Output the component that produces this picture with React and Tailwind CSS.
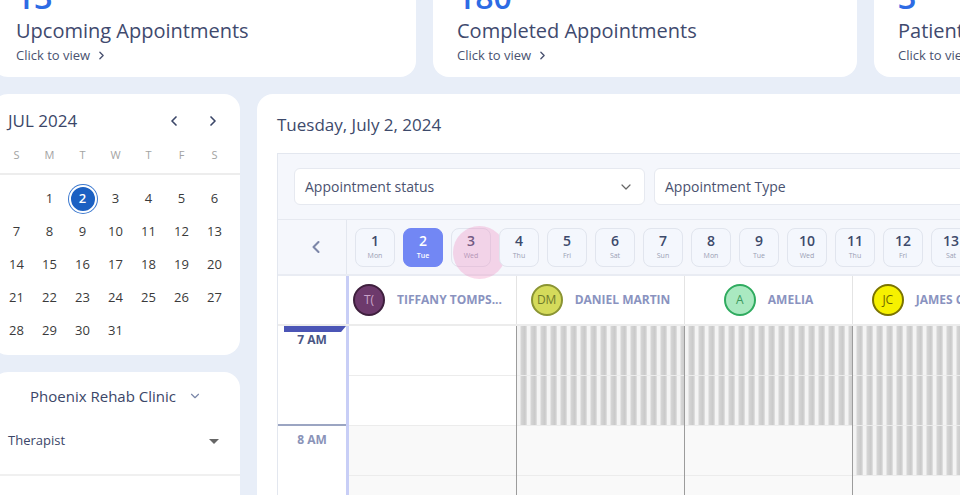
import React from "react";
import { ChevronLeft, ChevronRight, ChevronDown } from "lucide-react";

const stats = [
  { value: "13", label: "Upcoming Appointments" },
  { value: "180", label: "Completed Appointments" },
  { value: "3", label: "Patients" },
];

const weekdays = ["S", "M", "T", "W", "T", "F", "S"];

const monthCells = [
  null, 1, 2, 3, 4, 5, 6,
  7, 8, 9, 10, 11, 12, 13,
  14, 15, 16, 17, 18, 19, 20,
  21, 22, 23, 24, 25, 26, 27,
  28, 29, 30, 31, null, null, null,
];

const strip = [
  [1, "Mon"], [2, "Tue"], [3, "Wed"], [4, "Thu"], [5, "Fri"], [6, "Sat"], [7, "Sun"],
  [8, "Mon"], [9, "Tue"], [10, "Wed"], [11, "Thu"], [12, "Fri"], [13, "Sat"], [14, "Sun"],
];

const therapists = [
  { initials: "T(", name: "TIFFANY TOMPS...", avatar: "bg-[#6d3a6c] border-[#3e1f3d] text-[#c9a3c8]", left: true, blocked: [false, false, false, false] },
  { initials: "DM", name: "DANIEL MARTIN", avatar: "bg-[#d5db5b] border-[#8a9433] text-[#6f7a2c]", blocked: [true, true, false, false] },
  { initials: "A", name: "AMELIA", avatar: "bg-[#aae9c1] border-[#2fab5f] text-[#3c9a5d]", blocked: [true, true, false, false] },
  { initials: "JC", name: "JAMES CARTER", avatar: "bg-[#f6f100] border-[#7a7300] text-[#6d6900]", blocked: [true, true, true, false] },
];

function StatCard({ value, label }) {
  return (
    <div className="w-[424px] shrink-0 rounded-2xl bg-white px-6 pt-3 pb-3">
      <div className="text-[32px] leading-[40px] font-semibold text-[#2d6be4]">{value}</div>
      <div className="text-[20px] leading-[28px] font-medium text-[#3f4a6e]">{label}</div>
      <div className="flex items-center gap-[5px] text-[13px] leading-5 font-medium text-[#4a5270]">
        Click to view <ChevronRight size={13} strokeWidth={2.5} />
      </div>
    </div>
  );
}

function MiniCalendar() {
  return (
    <div className="h-[261px] rounded-2xl bg-white">
      <div className="mt-[15px] flex h-6 items-center justify-between pl-4 pr-[19px]">
        <span className="text-[17px] font-medium text-[#3b4668]">JUL 2024</span>
        <div className="flex items-center gap-[23px] text-[#3b4668]">
          <ChevronLeft size={16} strokeWidth={2.5} />
          <ChevronRight size={16} strokeWidth={2.5} />
        </div>
      </div>
      <div className="mt-[10px] grid h-6 grid-cols-[repeat(7,33px)] items-center pl-2">
        {weekdays.map((d, i) => (
          <span key={i} className="text-center text-[11px] text-[#a3a3a3]">{d}</span>
        ))}
      </div>
      <div className="mt-[6px] h-[2px] bg-[#ededed]" />
      <div className="mt-[7px] grid grid-cols-[repeat(7,33px)] pl-2">
        {monthCells.map((d, i) => (
          <div key={i} className="flex h-[33px] items-center justify-center">
            {d === 2 ? (
              <span className="flex h-[28px] w-[28px] items-center justify-center rounded-full border-2 border-white bg-[#1b60c2] text-[13px] font-semibold text-white ring-1 ring-[#3b78cf]">
                2
              </span>
            ) : (
              <span className="text-[13px] text-[#3a3a3a]">{d}</span>
            )}
          </div>
        ))}
      </div>
    </div>
  );
}

function ClinicCard() {
  return (
    <div className="h-[200px] rounded-2xl bg-white">
      <div className="mt-[14px] flex h-5 items-center justify-center gap-3">
        <span className="text-[15px] font-medium text-[#3b4668]">Phoenix Rehab Clinic</span>
        <ChevronDown size={14} strokeWidth={2} className="text-[#7a86a8]" />
      </div>
      <div className="mt-[25px] flex h-5 items-center justify-between pl-4 pr-[21px]">
        <span className="text-[13px] font-medium text-[#3b4668]">Therapist</span>
        <span className="h-0 w-0 border-x-[5px] border-t-[5px] border-x-transparent border-t-[#666]" />
      </div>
      <div className="mt-[23px] h-[2px] bg-[#f0f0f0]" />
    </div>
  );
}

const stripes =
  "bg-[repeating-linear-gradient(90deg,#f4f4f4_0px,#f4f4f4_3px,#d6d6d6_4px,#c9c9c9_8px,#e4e4e4_10px)]";

function Scheduler() {
  return (
    <div className="ml-5 border border-[#e3e7ef] bg-[#f5f7fc]">
      {/* filters */}
      <div className="flex gap-[9px] border-b border-[#e6e9f0] px-4 py-[14px]">
        <div className="flex h-[37px] w-[351px] items-center justify-between rounded-md border border-[#e6e9f0] bg-white pl-[10px] pr-[10px]">
          <span className="text-[14px] text-[#4a5270]">Appointment status</span>
          <ChevronDown size={16} strokeWidth={1.8} className="text-[#666]" />
        </div>
        <div className="flex h-[37px] w-[351px] items-center justify-between rounded-md border border-[#e6e9f0] bg-white pl-[10px] pr-[10px]">
          <span className="text-[14px] text-[#4a5270]">Appointment Type</span>
          <ChevronDown size={16} strokeWidth={1.8} className="text-[#666]" />
        </div>
      </div>

      {/* date strip */}
      <div className="flex h-[56px] border-b-2 border-[#e9ecf3]">
        <div className="flex w-[69px] shrink-0 items-center justify-center border-r border-[#e3e7ef] pl-[8px]">
          <ChevronLeft size={20} strokeWidth={2.5} className="text-[#7c86a8]" />
        </div>
        <div className="flex gap-2 pl-2 pt-2">
          {strip.map(([n, d]) => {
            const active = n === 2;
            return (
              <div
                key={n}
                className={`relative flex h-[39px] w-10 shrink-0 flex-col items-center rounded-lg border pt-[3px] ${
                  active ? "border-[#7287f4] bg-[#7287f4] text-white" : "border-[#e1e5ee] bg-[#f4f7fd] text-[#3d4a6b]"
                }`}
              >
                <span className="text-[14px] leading-[18px] font-semibold">{n}</span>
                <span className={`text-[7px] leading-[12px] ${active ? "font-semibold text-white" : "text-[#9aa0b4]"}`}>{d}</span>
                {n === 3 && (
                  <span className="absolute -top-[3px] left-[1px] h-[53px] w-[53px] rounded-full bg-[rgba(238,130,185,0.3)]" />
                )}
              </div>
            );
          })}
        </div>
      </div>

      {/* resources */}
      <div className="flex h-[48px] bg-white">
        <div className="w-[68px] shrink-0" />
        <div className="w-[3px] shrink-0 bg-[#c8cef6]" />
        {therapists.map((t) => (
          <div
            key={t.name}
            className={`flex w-[168px] shrink-0 items-center gap-3 border-r border-[#e4e4e4] ${t.left ? "pl-[4px]" : "justify-center"}`}
          >
            <span className={`flex h-8 w-8 shrink-0 items-center justify-center rounded-full border-2 text-[12px] ${t.avatar}`}>
              {t.initials}
            </span>
            <span className="whitespace-nowrap text-[12px] font-bold text-[#8a93c0]">{t.name}</span>
          </div>
        ))}
      </div>

      {/* grid */}
      <div className="flex border-t-2 border-[#ececec] bg-white">
        <div className="w-[68px] shrink-0">
          <div className="relative h-[100px] border-b-2 border-[#9ba5c2] pt-[6px] text-center text-[12px] leading-4 font-bold text-[#4a5685]">
            <span className="absolute left-[6px] right-0 top-0 h-[6px] bg-[#4b55b6] [clip-path:polygon(0_0,100%_0,92%_100%,0_100%)]" />
            7 AM
          </div>
          <div className="h-[100px] pt-[6px] text-center text-[12px] leading-4 font-bold text-[#8a93b8]">8 AM</div>
        </div>
        <div className="w-[3px] shrink-0 bg-[#c8cef6]" />
        {therapists.map((t) => (
          <div key={t.name} className="w-[168px] shrink-0 border-r border-[#9c9c9c]">
            {t.blocked.map((b, i) => (
              <div
                key={i}
                className={`h-[50px] border-b border-[#ececec] ${b ? stripes : i < 2 ? "bg-white" : "bg-[#f9f9f9]"}`}
              />
            ))}
          </div>
        ))}
      </div>
    </div>
  );
}

export default function App() {
  return (
    <div className="h-[495px] w-[960px] overflow-hidden bg-[#e8eef8] font-['Open_Sans',sans-serif]">
      <div className="-ml-[8px] -mt-[35px] flex w-[1400px] flex-col gap-[17px]">
        <div className="flex gap-[17px]">
          {stats.map((s) => (
            <StatCard key={s.label} {...s} />
          ))}
        </div>
        <div className="flex items-start gap-[17px]">
          <div className="flex w-[248px] shrink-0 flex-col gap-[17px]">
            <MiniCalendar />
            <ClinicCard />
          </div>
          <div className="h-[500px] flex-1 rounded-2xl bg-white pt-[19px]">
            <div className="flex h-6 items-center px-5 text-[17px] font-medium text-[#3d4a6b]">
              Tuesday, July 2, 2024
            </div>
            <div className="mt-4">
              <Scheduler />
            </div>
          </div>
        </div>
      </div>
    </div>
  );
}
